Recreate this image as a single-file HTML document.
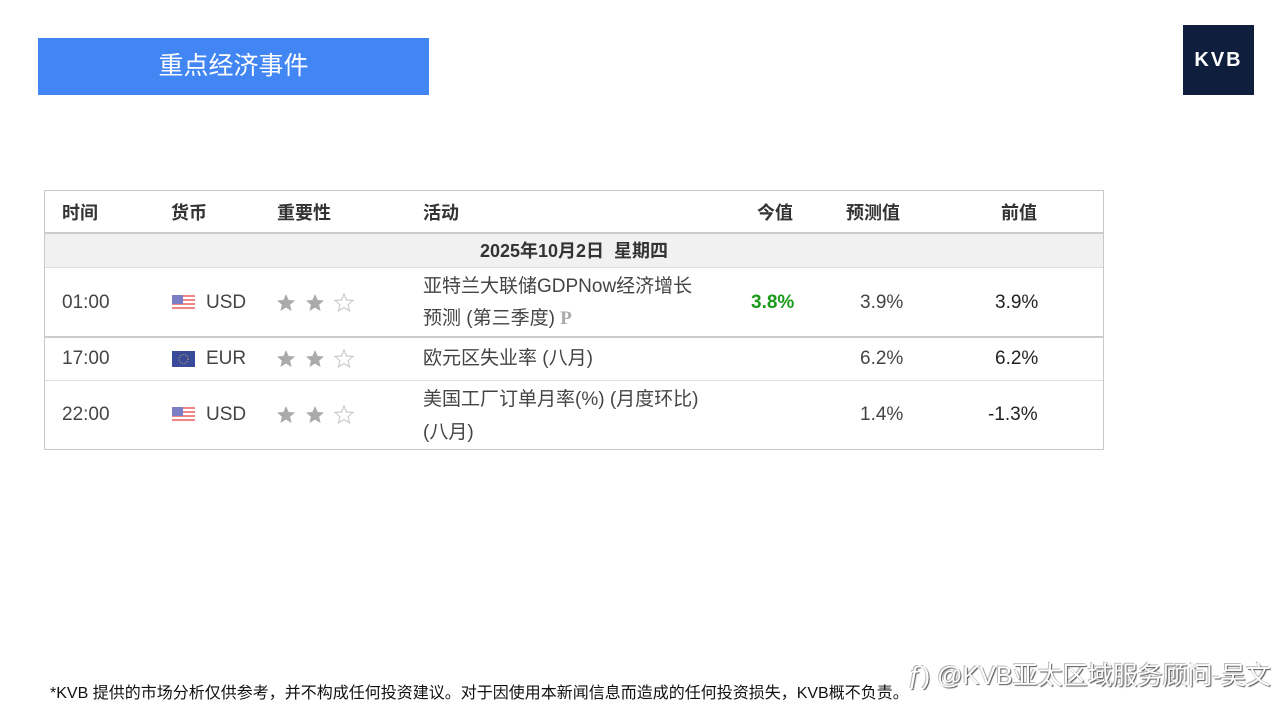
<!DOCTYPE html>
<html><head><meta charset="utf-8"><style>
body{margin:0;width:1283px;height:717px;background:#fff;position:relative;overflow:hidden;font-family:"Liberation Sans","Noto Sans CJK SC",sans-serif;color:#333}
.a{position:absolute}
.title{left:38px;top:38px;width:391px;height:57px;background:#4286f4;color:#fff;font-size:25px;line-height:57px;text-align:center}
.logo{left:1183px;top:25px;width:71px;height:70px;background:#0f1e3c;color:#fff;font-size:20px;font-weight:bold;line-height:70px;text-align:center;letter-spacing:2px}
.tbl{left:44px;top:190px;width:1058px;height:258px;border:1px solid #c8c8c8}
.h{font-size:18px;font-weight:bold;color:#333;line-height:22px}
.c{font-size:19px;color:#444;line-height:22px}
.flag{width:23px;height:16px}
.line{left:0;width:1058px;height:1px;background:#ddd}
.stars{width:80px;height:20px}
</style></head><body>
<div class="a title">重点经济事件</div>
<div class="a logo">KVB</div>
<svg width="0" height="0" style="position:absolute"><defs>
<symbol id="st" viewBox="0 0 80 20"><path d="M10 1l2.6 6 6.4.5-4.9 4.2 1.5 6.3L10 14.6 4.4 18l1.5-6.3L1 7.5l6.4-.5z" fill="#aaa"/><path transform="translate(29 0)" d="M10 1l2.6 6 6.4.5-4.9 4.2 1.5 6.3L10 14.6 4.4 18l1.5-6.3L1 7.5l6.4-.5z" fill="#aaa"/><path transform="translate(58 0)" d="M10 1l2.6 6 6.4.5-4.9 4.2 1.5 6.3L10 14.6 4.4 18l1.5-6.3L1 7.5l6.4-.5z" fill="none" stroke="#ccc" stroke-width="1.2"/></symbol>
<symbol id="us" viewBox="0 0 23 16"><rect width="23" height="16" fill="#e88"/><rect y="2" width="23" height="2" fill="#fff"/><rect y="6" width="23" height="2" fill="#fff"/><rect y="10" width="23" height="2" fill="#fff"/><rect y="14" width="23" height="2" fill="#fff"/><rect width="11" height="9" fill="#7a7ec4"/></symbol>
</defs></svg>
<div class="a tbl">
 <div class="a h" style="left:17px;top:11px">时间</div>
 <div class="a h" style="left:126px;top:11px">货币</div>
 <div class="a h" style="left:232px;top:11px">重要性</div>
 <div class="a h" style="left:378px;top:11px">活动</div>
 <div class="a h" style="left:712px;top:11px">今值</div>
 <div class="a h" style="left:801px;top:11px">预测值</div>
 <div class="a h" style="left:956px;top:11px">前值</div>
 <div class="a" style="left:0;top:41px;width:1058px;height:33px;background:#f1f1f1;border-top:2px solid #ccc;border-bottom:1px solid #ddd"></div>
 <div class="a h" style="left:0;width:1058px;text-align:center;top:49px">2025年10月2日&nbsp; 星期四</div>
 <div class="a line" style="top:145px;height:2px;background:#ccc"></div>
 <div class="a line" style="top:189px"></div>
 <!-- row1 -->
 <div class="a c" style="left:17px;top:101px">01:00</div>
 <svg class="a flag" style="left:127px;top:104px"><use href="#us"/></svg>
 <div class="a c" style="left:161px;top:101px">USD</div>
 <svg class="a stars" style="left:231px;top:102px"><use href="#st"/></svg>
 <div class="a c" style="left:378px;top:80px;line-height:32px">亚特兰大联储GDPNow经济增长<br>预测 (第三季度) <b style="color:#aaa;font-family:'Liberation Serif'">P</b></div>
 <div class="a c" style="left:706px;top:101px;color:#1a9a1a;font-weight:bold">3.8%</div>
 <div class="a c" style="left:815px;top:101px">3.9%</div>
 <div class="a c" style="left:950px;top:101px;color:#222">3.9%</div>
 <!-- row2 -->
 <div class="a c" style="left:17px;top:157px">17:00</div>
 <svg class="a flag" style="left:127px;top:160px" viewBox="0 0 23 16"><rect width="23" height="16" fill="#3a4a9a"/><circle cx="11.5" cy="8" r="4.5" fill="none" stroke="#c8b060" stroke-dasharray="1 1.5"/></svg>
 <div class="a c" style="left:161px;top:157px">EUR</div>
 <svg class="a stars" style="left:231px;top:158px"><use href="#st"/></svg>
 <div class="a c" style="left:378px;top:157px">欧元区失业率 (八月)</div>
 <div class="a c" style="left:815px;top:157px">6.2%</div>
 <div class="a c" style="left:950px;top:157px;color:#222">6.2%</div>
 <!-- row3 -->
 <div class="a c" style="left:17px;top:213px">22:00</div>
 <svg class="a flag" style="left:127px;top:216px"><use href="#us"/></svg>
 <div class="a c" style="left:161px;top:213px">USD</div>
 <svg class="a stars" style="left:231px;top:214px"><use href="#st"/></svg>
 <div class="a c" style="left:378px;top:192px;line-height:33px">美国工厂订单月率(%) (月度环比)<br>(八月)</div>
 <div class="a c" style="left:815px;top:213px">1.4%</div>
 <div class="a c" style="left:943px;top:213px;color:#222">-1.3%</div>
</div>
<div class="a" style="left:50px;top:679px;font-size:16px;color:#111;white-space:nowrap">*KVB 提供的市场分析仅供参考，并不构成任何投资建议。对于因使用本新闻信息而造成的任何投资损失，KVB概不负责。</div>
<div class="a" style="left:908px;top:656px;font-size:25px;color:#fff;text-shadow:1px 1px 1px #555,-1px -1px 0 #bbb;white-space:nowrap">ƒ) @KVB亚太区域服务顾问-吴文</div>
</body></html>
